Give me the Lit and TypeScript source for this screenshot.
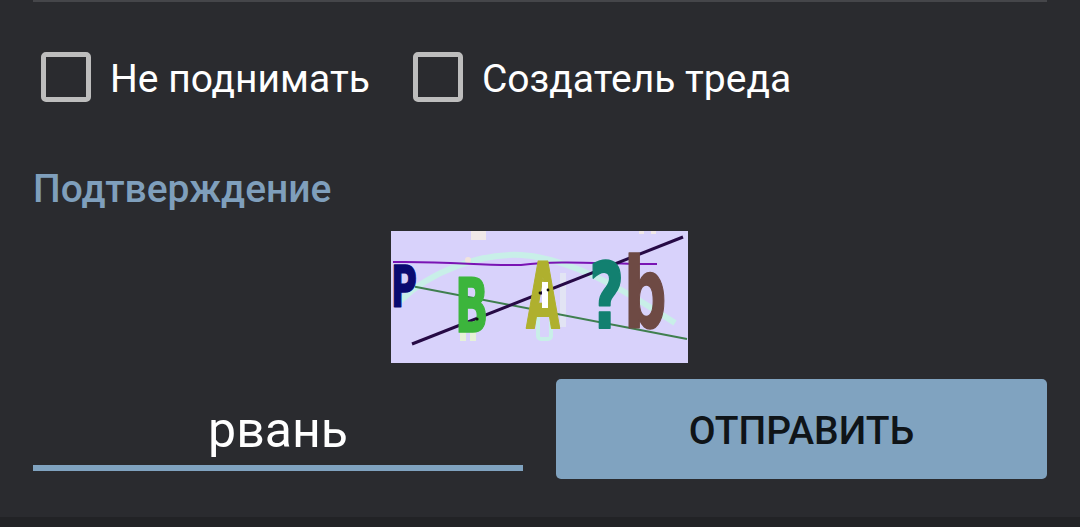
import { LitElement, html, css, svg } from "lit";
import { customElement } from "lit/decorators.js";

const captcha = svg`
<svg class="captcha" viewBox="0 0 297 132" width="297" height="132" xmlns="http://www.w3.org/2000/svg">
  <rect width="297" height="132" fill="#d8d2fb"/>
  <rect x="80" y="0" width="15" height="9" fill="#f0e8e8"/>
  <rect x="248" y="0" width="5" height="3" fill="#f0e8e8"/>
  <rect x="260" y="0" width="5" height="3" fill="#f0e8e8"/>
  <path d="M9 70 C 40 40, 90 22, 130 24 C 180 27, 235 60, 284 92" fill="none" stroke="#c8efe8" stroke-width="6"/>
  <circle cx="77" cy="29" r="3" fill="#f0e4dc"/>
  <path d="M2 31 C 60 30, 90 35, 130 34 C 170 29, 210 33, 266 33" fill="none" stroke="#7a14b4" stroke-width="2"/>
  <rect x="69" y="90" width="6" height="20" fill="#e6f2d8"/>
  <rect x="79" y="90" width="6" height="20" fill="#e6f2d8"/>
  <rect x="147" y="83" width="13" height="25" rx="3" fill="none" stroke="#c8efe8" stroke-width="4"/>
  <rect x="169" y="42" width="6" height="54" fill="#e2e4f4"/>
  <path d="M24 55.7 L296 108" stroke="#3f7f4f" stroke-width="2"/>
  <path d="M21 113 L292 6" stroke="#260a45" stroke-width="3"/>
  <g font-family="'DejaVu Sans', sans-serif" font-weight="700" stroke-width="1.6" stroke-linejoin="round">
    <text transform="translate(0,76) scale(.62,1)" font-size="57" fill="#0a0a70" stroke="#0a0a70">P</text>
    <text transform="translate(64,101) scale(.62,1.05)" font-size="71" fill="#3cb53c" stroke="#3cb53c">B</text>
    <text transform="translate(135,97) scale(.6,1.25)" font-size="73" fill="#afb02e" stroke="#afb02e">A</text>
    <text transform="translate(198,97) scale(.8,1.2)" font-size="76" fill="#128070" stroke="#128070">?</text>
    <text transform="translate(233,97) scale(.62,1.02)" font-size="96" fill="#6e4a44" stroke="#6e4a44">b</text>
  </g>
  <rect x="151" y="51" width="6" height="26" fill="#ffffff"/>
  <circle cx="86" cy="88" r="1.6" fill="#111"/>
  <circle cx="149" cy="62" r="1.4" fill="#111"/>
  <circle cx="157" cy="59" r="1.4" fill="#111"/>
</svg>`;

@customElement("app-root")
export class AppRoot extends LitElement {
  static styles = css`
    :host {
      display: block;
      width: 1080px;
      height: 527px;
      overflow: hidden;
      background: #2a2b2f;
      font-family: Roboto, sans-serif;
      color: #fff;
    }
    .panel {
      height: 517px;
      box-sizing: border-box;
      padding: 0 33px;
      display: flex;
      flex-direction: column;
    }
    .rule {
      height: 2px;
      background: #45464a;
      flex: none;
    }
    .checks {
      display: flex;
      align-items: center;
      gap: 43px;
      margin-top: 50px;
      padding-left: 8px;
      height: 50px;
    }
    .check {
      display: flex;
      align-items: center;
      gap: 19px;
      font-size: 39px;
      line-height: 54px;
    }
    .check-text {
      padding-top: 3px;
    }
    .box {
      width: 50px;
      height: 50px;
      box-sizing: border-box;
      border: 5px solid #bdbdbd;
      border-radius: 5px;
    }
    .label {
      margin-top: 65px;
      font-size: 39px;
      line-height: 44px;
      font-weight: 500;
      color: #7f9fbc;
    }
    .captcha {
      display: block;
      align-self: center;
      margin-top: 20px;
      margin-right: 1px;
    }
    .bottom {
      display: grid;
      grid-template-columns: 490px 491px;
      justify-content: space-between;
      margin-top: 16px;
    }
    .input {
      height: 92px;
      box-sizing: border-box;
      border-bottom: 6px solid #80a3c0;
      text-align: center;
      font-size: 50px;
      line-height: 102px;
    }
    .send {
      height: 100px;
      box-sizing: border-box;
      padding-top: 3px;
      border-radius: 5px;
      background: #80a3c0;
      color: #0f1418;
      display: flex;
      align-items: center;
      justify-content: center;
      font-size: 39px;
      font-weight: 500;
    }
    .foot {
      height: 10px;
      background: #222326;
    }
  `;

  render() {
    return html`
      <div class="panel">
        <div class="rule"></div>
        <div class="checks">
          <div class="check"><span class="box"></span><span class="check-text">Не поднимать</span></div>
          <div class="check"><span class="box"></span><span class="check-text">Создатель треда</span></div>
        </div>
        <div class="label">Подтверждение</div>
        ${captcha}
        <div class="bottom">
          <div class="input">рвань</div>
          <div class="send">ОТПРАВИТЬ</div>
        </div>
      </div>
      <div class="foot"></div>
    `;
  }
}
